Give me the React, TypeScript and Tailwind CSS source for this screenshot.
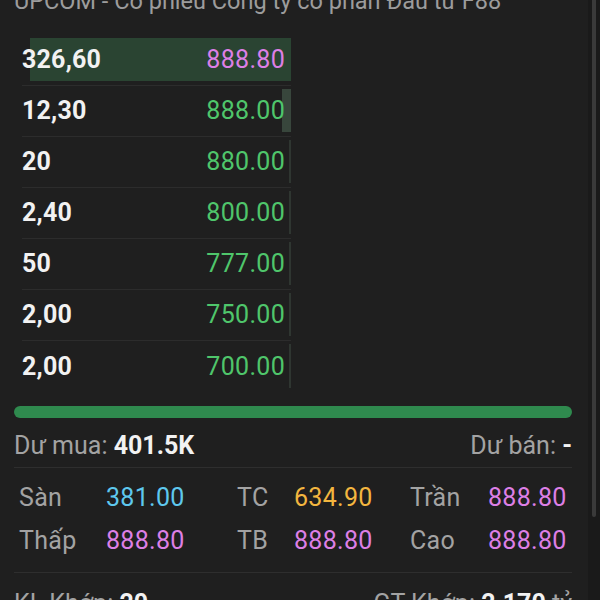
import React from 'react';

const rows = [
  { vol: '326,60', price: '888.80', color: 'text-[#dd7fe6]', bar: 261 },
  { vol: '12,30', price: '888.00', color: 'text-[#4fc66b]', bar: 9 },
  { vol: '20', price: '880.00', color: 'text-[#4fc66b]', bar: 2 },
  { vol: '2,40', price: '800.00', color: 'text-[#4fc66b]', bar: 2 },
  { vol: '50', price: '777.00', color: 'text-[#4fc66b]', bar: 2 },
  { vol: '2,00', price: '750.00', color: 'text-[#4fc66b]', bar: 2 },
  { vol: '2,00', price: '700.00', color: 'text-[#4fc66b]', bar: 2 },
];

const stats = [
  [
    { label: 'Sàn', value: '381.00', color: 'text-[#5ec8ee]' },
    { label: 'TC', value: '634.90', color: 'text-[#f3b63f]' },
    { label: 'Trần', value: '888.80', color: 'text-[#dd7fe6]' },
  ],
  [
    { label: 'Thấp', value: '888.80', color: 'text-[#dd7fe6]' },
    { label: 'TB', value: '888.80', color: 'text-[#dd7fe6]' },
    { label: 'Cao', value: '888.80', color: 'text-[#dd7fe6]' },
  ],
];

const labelW = ['w-[87px]', 'w-[57px]', 'w-[78px]'];
const valueW = ['w-[131px]', 'w-[116px]', 'w-auto'];

function barColor(i: number) {
  if (i === 0) return 'bg-[#2a4432]';
  if (i === 1) return 'bg-[#38463c]';
  return 'bg-[#2f3631]';
}

export default function App() {
  return (
    <div
      className="w-[600px] h-[600px] overflow-hidden bg-[#1f1f1f] flex"
      style={{ fontFamily: 'Roboto, "Noto Sans", sans-serif' }}
    >
      {/* Main panel */}
      <div className="w-[588px] flex flex-col px-[14px]">
        {/* Title, cut at top */}
        <div className="shrink-0 -mt-[16px] h-[34px] text-[23.5px] leading-[34px] text-[#9c9c9c] whitespace-nowrap">
          UPCOM - Cổ phiếu Công ty cổ phần Đầu tư F88
        </div>

        {/* Order book */}
        <div className="shrink-0 ml-[8px] w-[269px] mt-[17px]">
          {rows.map((r, i) => (
            <div
              key={i}
              className="relative h-[51px] flex items-center justify-between border-b border-[#2c2c2c] last:border-b-0"
            >
              <div
                className={`absolute right-0 top-[3px] bottom-[4px] ${barColor(i)}`}
                style={{ width: r.bar }}
              />
              <span className="relative text-[25px] font-bold text-[#f2f2f2] tracking-[0.2px]">{r.vol}</span>
              <span className={`relative mr-[6px] text-[25px] tracking-[0.3px] ${r.color}`}>{r.price}</span>
            </div>
          ))}
        </div>

        {/* Buy/sell ratio bar */}
        <div className="shrink-0 mt-[14px] h-[12px] w-[558px] rounded-full bg-[#2f8a4e]" />

        {/* Dư mua / Dư bán */}
        <div className="shrink-0 mt-[13px] w-[558px] h-[30px] flex items-center justify-between text-[25px] border-b border-[#2e2e2e] box-content pb-[6px]">
          <div>
            <span className="text-[#a3a3a3]">Dư mua: </span>
            <span className="font-bold text-[#f2f2f2]">401.5K</span>
          </div>
          <div>
            <span className="text-[#a3a3a3]">Dư bán: </span>
            <span className="font-bold text-[#f2f2f2]">-</span>
          </div>
        </div>

        {/* Price stats */}
        <div className="shrink-0 w-[558px] pt-[8px] pb-[10px] border-b border-[#2e2e2e]">
          {stats.map((row, ri) => (
            <div key={ri} className="h-[43px] flex items-center pl-[5px] text-[25px] tracking-[0.3px]">
              {row.map((s, si) => (
                <React.Fragment key={si}>
                  <span className={`${labelW[si]} text-[#a3a3a3]`}>{s.label}</span>
                  <span className={`${valueW[si]} ${s.color}`}>{s.value}</span>
                </React.Fragment>
              ))}
            </div>
          ))}
        </div>

        {/* Matched volume / value, cut at bottom */}
        <div className="shrink-0 mt-[16px] w-[558px] h-[30px] flex items-center justify-between text-[25px] whitespace-nowrap">
          <div>
            <span className="text-[#a3a3a3]">KL Khớp: </span>
            <span className="font-bold text-[#f2f2f2]">20</span>
          </div>
          <div>
            <span className="text-[#a3a3a3]">GT Khớp: </span>
            <span className="font-bold text-[#f2f2f2]">2.170</span>
            <span className="text-[#a3a3a3]"> tỷ</span>
          </div>
        </div>
      </div>

      {/* Scrollbar */}
      <div className="w-[12px] h-full bg-[#1a1a1a] flex justify-center">
        <div className="w-[4px] h-[517px] bg-[#3a3a3a] rounded-b-sm" />
      </div>
    </div>
  );
}
